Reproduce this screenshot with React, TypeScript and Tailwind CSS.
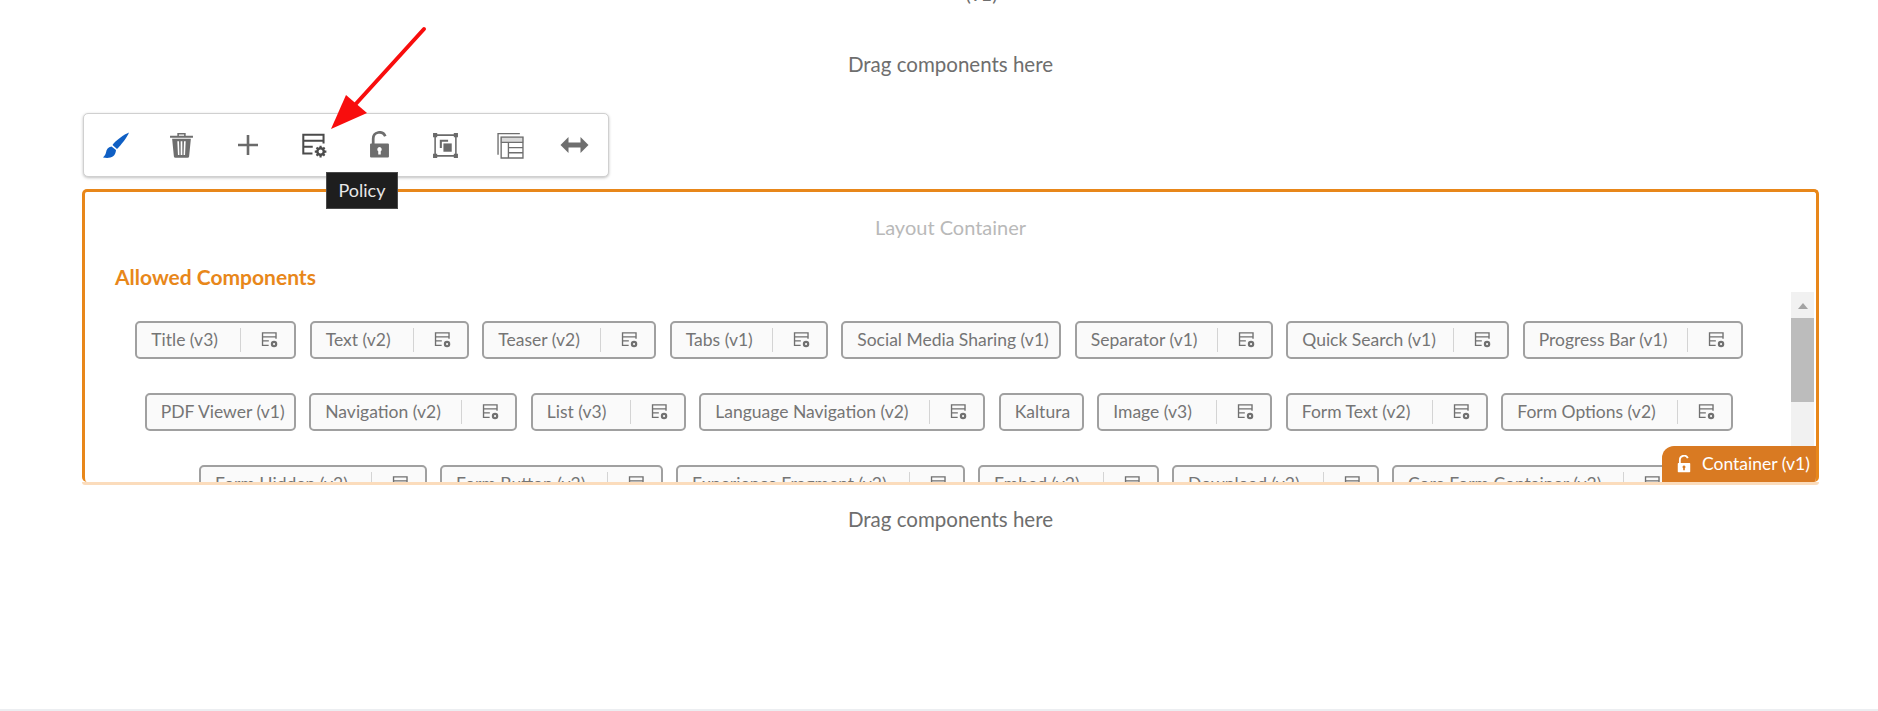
const font = { fontFamily: 'Lato, "Noto Sans", sans-serif' };

function PolicyIcon({ className = "", gear = false }: { className?: string; gear?: boolean }) {
  return (
    <svg viewBox="0 0 20 20" className={className} fill="none" stroke="currentColor" strokeWidth="1.500">
      <path d="M8.500 16H1.700V2h15v6.500M1.700 6.500h15M1.700 11h7" />
      {gear ? (
        <g>
          <circle cx="14.500" cy="14.500" r="2.400" strokeWidth="1.800" />
          <path d="M14.500 10.200v1.800M14.500 17v1.800M10.200 14.500H12M17 14.500h1.800M11.500 11.500l1.200 1.200M16.300 16.300l1.200 1.200M11.500 17.500l1.200-1.200M16.300 12.700l1.200-1.200" strokeWidth="1.600" />
        </g>
      ) : (
        <>
          <circle cx="14.500" cy="14.500" r="3.600" fill="currentColor" stroke="none" />
          <circle cx="14.500" cy="14.500" r="1.200" fill="#fafafa" stroke="none" />
        </>
      )}
    </svg>
  );
}

function Lock({ className = "" }: { className?: string }) {
  return (
    <svg viewBox="0 0 20 26" className={className}>
      <path d="M4 12V7a6 6 0 0 1 11.500-2.400" fill="none" stroke="currentColor" strokeWidth="2.600" />
      <path fillRule="evenodd" fill="currentColor" d="M2 11.500h16a1 1 0 0 1 1 1V24a1 1 0 0 1-1 1H2a1 1 0 0 1-1-1V12.500a1 1 0 0 1 1-1ZM10 15a2.200 2.200 0 0 0-1.200 4v3h2.400v-3A2.200 2.200 0 0 0 10 15Z" />
    </svg>
  );
}

type ChipData = { label: string; width: number; policy?: boolean };

const rows: ChipData[][] = [
  [
    { label: "Title (v3)", width: 161, policy: true },
    { label: "Text (v2)", width: 159, policy: true },
    { label: "Teaser (v2)", width: 174, policy: true },
    { label: "Tabs (v1)", width: 158, policy: true },
    { label: "Social Media Sharing (v1)", width: 220 },
    { label: "Separator (v1)", width: 198, policy: true },
    { label: "Quick Search (v1)", width: 223, policy: true },
    { label: "Progress Bar (v1)", width: 220, policy: true },
  ],
  [
    { label: "PDF Viewer (v1)", width: 151 },
    { label: "Navigation (v2)", width: 208, policy: true },
    { label: "List (v3)", width: 155, policy: true },
    { label: "Language Navigation (v2)", width: 286, policy: true },
    { label: "Kaltura", width: 85 },
    { label: "Image (v3)", width: 175, policy: true },
    { label: "Form Text (v2)", width: 202, policy: true },
    { label: "Form Options (v2)", width: 232, policy: true },
  ],
  [
    { label: "Form Hidden (v2)", width: 228, policy: true },
    { label: "Form Button (v2)", width: 223, policy: true },
    { label: "Experience Fragment (v2)", width: 289, policy: true },
    { label: "Embed (v2)", width: 181, policy: true },
    { label: "Download (v2)", width: 207, policy: true },
    { label: "Core Form Container (v2)", width: 287, policy: true },
  ],
];

function Chip({ label, width, policy }: ChipData) {
  return (
    <div
      style={{ width }}
      className="flex h-[38px] shrink-0 items-center rounded-[5px] border-2 border-[#a0a0a0] bg-[#fafafa] pl-[14px] text-[#757575]"
    >
      <span className="flex-1 whitespace-nowrap text-[17.5px] leading-none">{label}</span>
      {policy && (
        <>
          <span className="h-6 w-px bg-[#d4d4d4]" />
          <PolicyIcon className="ml-[20px] mr-[15px] h-[18px] w-[18px] text-[#707070]" />
        </>
      )}
    </div>
  );
}

function Toolbar() {
  return (
    <div className="ml-[1px] flex h-[64px] w-[526px] items-center rounded-[5px] border border-[#d0d0d0] bg-white pl-[18px] shadow-[0_1px_3px_rgba(0,0,0,0.25)]">
      <div className="flex w-[66px] justify-start">
        <svg viewBox="0 0 28 28" className="h-[28px] w-[28px] text-[#0f5fc4]" fill="currentColor">
          <path d="M27 1.500C22 3.500 14 9 10.500 14l4.500 4C19.500 13.500 25 6.500 27 1.500Z" />
          <path d="M9.500 15.500c-3.500.5-5 3-5.500 6C3.500 23.500 2.500 25 1 26.500c6 1 12.500.5 13-7.500Z" />
        </svg>
      </div>
      <div className="flex w-[66px] justify-start">
        <svg viewBox="0 0 24 26" className="ml-[1px] h-[28px] w-[25px] text-[#6e6e6e]" fill="currentColor">
          <path d="M1 4h22v2H1ZM8 4V1.500h8V4h-1.500V3h-5v1Z" />
          <path fillRule="evenodd" d="M3 7h18l-1.700 17a1.500 1.500 0 0 1-1.500 1.300H6.200a1.500 1.500 0 0 1-1.500-1.300ZM8 9.500l.6 13h1.400l-.4-13ZM11.200 9.500v13h1.600v-13ZM14.400 9.500l-.4 13h1.400l.6-13Z" />
        </svg>
      </div>
      <div className="flex w-[65px] justify-start">
        <svg viewBox="0 0 20 20" className="ml-[4px] h-[20px] w-[20px] text-[#6a6a6a]" fill="none" stroke="currentColor" strokeWidth="2.600">
          <path d="M10 0v20M0 10h20" />
        </svg>
      </div>
      <div className="flex w-[65px] justify-start">
        <PolicyIcon gear className="ml-[2px] h-[27px] w-[27px] text-[#4b4b4b]" />
      </div>
      <div className="flex w-[66px] justify-start">
        <Lock className="ml-[5px] h-[28px] w-[21px] text-[#6e6e6e]" />
      </div>
      <div className="flex w-[65px] justify-start">
        <svg viewBox="0 0 26 26" className="ml-[2px] h-[27px] w-[27px] text-[#6a6a6a]">
          <path d="M3 3h20v20H3Z" fill="none" stroke="currentColor" strokeWidth="1.500" />
          <path d="M7.500 7.500h8v2h-6v6h-2Z" fill="currentColor" />
          <path d="M11 11h8v8h-8Z" fill="currentColor" />
          <path d="M1 1h4v4H1ZM21 1h4v4h-4ZM1 21h4v4H1ZM21 21h4v4h-4Z" fill="currentColor" />
        </svg>
      </div>
      <div className="flex w-[63px] justify-start">
        <svg viewBox="0 0 26 26" className="ml-[2px] h-[27px] w-[27px] text-[#6e6e6e]" fill="none" stroke="currentColor" strokeWidth="1.300">
          <path d="M1 22V1.500h21" />
          <path d="M4 5h21v20H4Z" />
          <path d="M4 10h21M11 10v15M11 15h14M11 20h14" />
          <path d="M4 5h21v5H4Z" fill="currentColor" opacity="0.25" />
        </svg>
      </div>
      <svg viewBox="0 0 28 16" className="ml-[2px] h-[16px] w-[29px] text-[#6e6e6e]" fill="currentColor">
        <path d="M0 8 8 0v5.500h12V0l8 8-8 8v-5.500H8V16Z" />
      </svg>
    </div>
  );
}

export default function App() {
  return (
    <div style={font} className="relative flex h-[711px] w-full flex-col overflow-hidden bg-white pl-[82px] pr-[59px]">
      <div className="-mt-[17px] h-[20px] text-center text-[20px] leading-[20px] text-[#6e6e6e]">
        <span className="ml-[62px]">(v1)</span>
      </div>
      <div className="mt-[49px] h-[24px] text-center text-[20.5px] leading-[24px] text-[#6e6e6e]">
        Drag components here
      </div>

      <div className="mt-[37px]">
        <Toolbar />
      </div>

      <div className="relative mt-[12px] h-[293px] overflow-hidden rounded-[5px] border-x-[3px] border-t-[3px] border-b-0 border-[#e8871a]">
        <div className="h-[37px] pt-[23px] text-center text-[20px] leading-[24px] text-[#b9b9b9]">
          Layout Container
        </div>
        <div className="mt-[36px] pl-[30px] text-[21px] font-bold leading-[24px] text-[#e8871a]">
          Allowed Components
        </div>
        <div className="mt-[3px] flex h-[200px]">
          <div className="flex min-w-0 flex-1 flex-col items-center gap-[34px] overflow-hidden pl-[2px] pt-[29px]">
            {rows.map((row, i) => (
              <div key={i} className={i === 2 ? "flex gap-[13px]" : "flex gap-[13.5px]"}>
                {row.map((c) => (
                  <Chip key={c.label} {...c} />
                ))}
              </div>
            ))}
          </div>
          <div className="mr-[2px] flex w-[23px] flex-col items-center bg-[#f1f1f1] pt-[11px]">
            <div className="h-0 w-0 border-x-[5px] border-b-[6px] border-x-transparent border-b-[#a3a3a3]" />
            <div className="mt-[9px] h-[84px] w-[23px] bg-[#bcbcbc]" />
          </div>
        </div>
        <div className="absolute bottom-0 right-0 flex h-[36px] w-[154px] items-center gap-[11px] rounded-tl-[12px] bg-[#d97a22] pl-[15px] text-[17.5px] text-white">
          <Lock className="h-[18px] w-[14px]" />
          <span className="whitespace-nowrap">Container (v1)</span>
        </div>
      </div>
      <div className="h-[3px] rounded-b-[3px] bg-[#fbdcbc]" />

      <div className="mt-[22px] h-[24px] text-center text-[20.5px] leading-[24px] text-[#6e6e6e]">
        Drag components here
      </div>

      <div className="absolute bottom-0 left-0 h-[2px] w-full bg-[#eceef1]" />

      <svg className="absolute left-[320px] top-[20px] h-[115px] w-[120px]" viewBox="0 0 120 115">
        <path d="M104 9 33 87" stroke="#f80d0d" strokeWidth="4" strokeLinecap="round" fill="none" />
        <path d="M11 109 26 75 47 93Z" fill="#f80d0d" />
      </svg>

      <div className="absolute left-[326px] top-[172px] flex h-[37px] w-[72px] items-center justify-center border border-[#4a4a4a] bg-[#1e1e1e] text-[18px] text-[#e8e8e8]">
        Policy
      </div>
    </div>
  );
}
